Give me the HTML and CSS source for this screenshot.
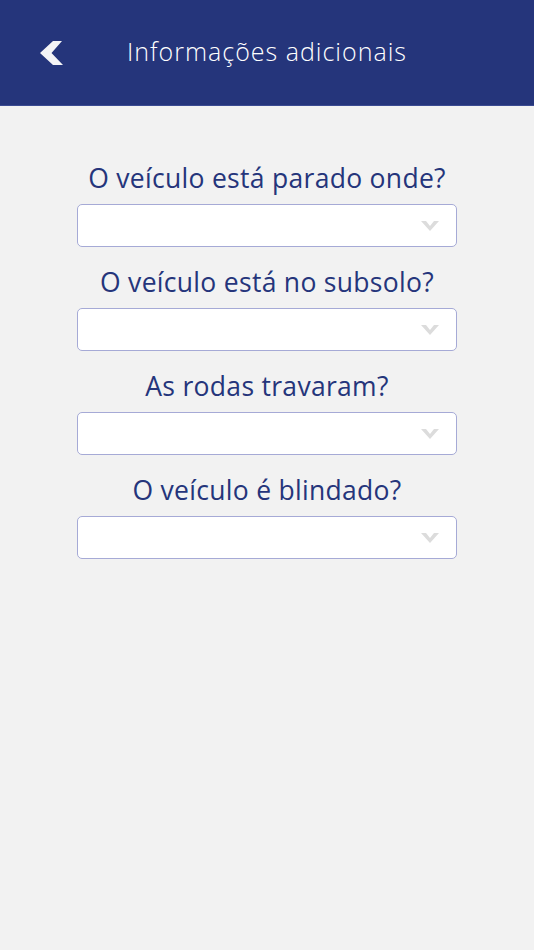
FILE: index.html
```html
<!DOCTYPE html>
<html lang="pt">
<head>
<meta charset="utf-8">
<title>Informações adicionais</title>
<link rel="stylesheet" href="styles.css">
</head>
<body>
<header class="topbar">
  <div class="back">
    <svg width="25" height="26" viewBox="0 0 25 26"><polygon points="14,1 23,1 12.5,13 24,25 14,25 1,13" fill="#f4f4f6"/></svg>
  </div>
  <h1 class="title">Informações adicionais</h1>
  <div></div>
</header>
<main class="form">
  <div class="field">
    <label class="question">O veículo está parado onde?</label>
    <div class="select"><svg class="chev" width="18" height="12" viewBox="0 0 18 12"><polygon points="0,1 5,1 9,6 13,1 18,1 9,11" fill="#dcdcdc"/></svg></div>
  </div>
  <div class="field">
    <label class="question">O veículo está no subsolo?</label>
    <div class="select"><svg class="chev" width="18" height="12" viewBox="0 0 18 12"><polygon points="0,1 5,1 9,6 13,1 18,1 9,11" fill="#dcdcdc"/></svg></div>
  </div>
  <div class="field">
    <label class="question">As rodas travaram?</label>
    <div class="select"><svg class="chev" width="18" height="12" viewBox="0 0 18 12"><polygon points="0,1 5,1 9,6 13,1 18,1 9,11" fill="#dcdcdc"/></svg></div>
  </div>
  <div class="field">
    <label class="question">O veículo é blindado?</label>
    <div class="select"><svg class="chev" width="18" height="12" viewBox="0 0 18 12"><polygon points="0,1 5,1 9,6 13,1 18,1 9,11" fill="#dcdcdc"/></svg></div>
  </div>
</main>
</body>
</html>
```
FILE: styles.css
```css
html, body {
  margin: 0;
  padding: 0;
}
body {
  background: #f2f2f2;
  font-family: "Open Sans", "Noto Sans", sans-serif;
  width: 534px;
  height: 950px;
}
.topbar {
  height: 105px;
  background: #25357b;
  border-bottom: 1px solid #3b4b92;
  display: grid;
  grid-template-columns: 1fr auto 1fr;
  align-items: center;
}
.back {
  padding-left: 39px;
  display: flex;
  align-items: center;
  height: 26px;
}
.title {
  margin: 0;
  color: #ffffff;
  font-weight: 300;
  font-size: 25px;
  letter-spacing: 1px;
  line-height: 32px;
  position: relative;
  top: -2px;
}
.form {
  padding-top: 54px;
  display: flex;
  flex-direction: column;
  gap: 17px;
  width: 380px;
  margin: 0 auto;
}
.field {
  display: flex;
  flex-direction: column;
  gap: 8px;
}
.question {
  display: block;
  text-align: center;
  color: #25357b;
  font-size: 26.5px;
  letter-spacing: 0.3px;
  line-height: 36px;
  white-space: nowrap;
}
.select {
  box-sizing: border-box;
  height: 43px;
  background: #ffffff;
  border: 1px solid #a6aad6;
  border-radius: 5px;
  display: flex;
  align-items: center;
  justify-content: flex-end;
  padding-right: 17px;
}
.chev {
  display: block;
}
```
